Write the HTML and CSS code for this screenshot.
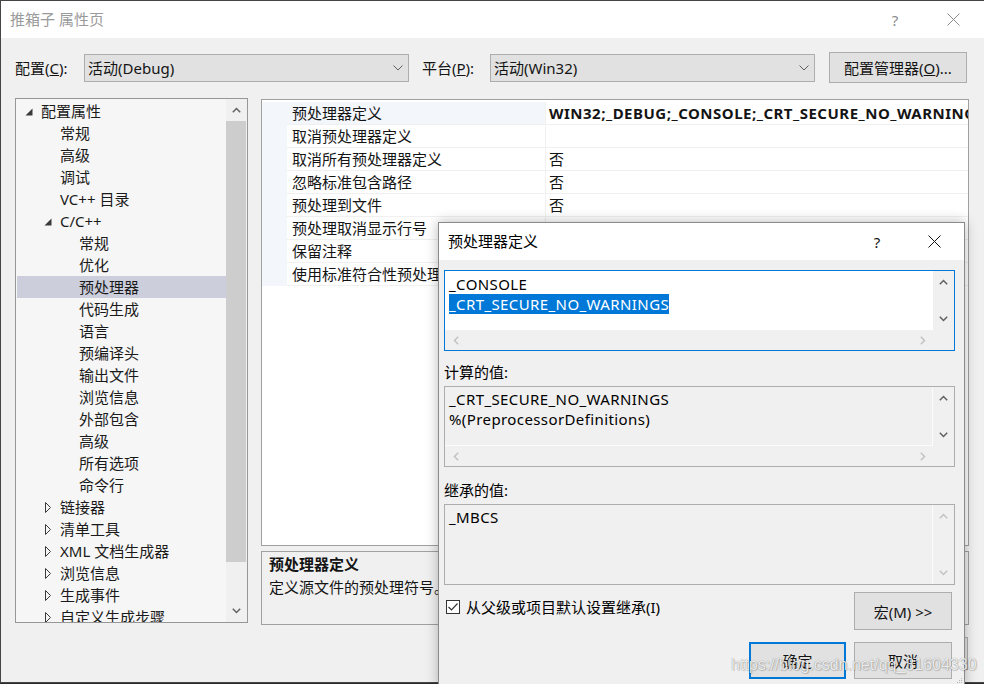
FILE: index.html
```html
<!DOCTYPE html>
<html lang="zh-CN">
<head>
<meta charset="utf-8">
<title>推箱子 属性页</title>
<link rel="stylesheet" href="styles.css">
</head>
<body>
<div class="window">
  <div class="titlebar">
    <span class="title">推箱子 属性页</span>
    <span class="cap-btn help">?</span>
    <span class="cap-btn close"><svg width="13" height="13" viewBox="0 0 13 13"><path d="M0.5 0.5 L12.5 12.5 M12.5 0.5 L0.5 12.5" stroke="currentColor" stroke-width="1" fill="none"/></svg></span>
  </div>
  <div class="client">
    <div class="config-row">
      <span class="cfg-label first">配置(<u>C</u>):</span>
      <div class="combo"><span class="combo-text">活动(Debug)</span><svg class="combo-arrow" width="10" height="6" viewBox="0 0 10 6"><path d="M0.5 0.5 L5 5 L9.5 0.5" stroke="#606060" stroke-width="1" fill="none"/></svg></div>
      <span class="cfg-label second">平台(<u>P</u>):</span>
      <div class="combo"><span class="combo-text">活动(Win32)</span><svg class="combo-arrow" width="10" height="6" viewBox="0 0 10 6"><path d="M0.5 0.5 L5 5 L9.5 0.5" stroke="#606060" stroke-width="1" fill="none"/></svg></div>
      <button class="btn cfg-mgr">配置管理器(<u>O</u>)...</button>
    </div>

    <div class="content">
      <div class="tree">
        <div class="tree-list">
          <div class="trow l0"><span class="tog"><svg width="8" height="8" viewBox="0 0 8 8"><polygon points="7.5,0.5 7.5,7.5 0.5,7.5" fill="#3a3a3a"/></svg></span>配置属性</div>
          <div class="trow l1"><span class="tog"></span>常规</div>
          <div class="trow l1"><span class="tog"></span>高级</div>
          <div class="trow l1"><span class="tog"></span>调试</div>
          <div class="trow l1"><span class="tog"></span>VC++ 目录</div>
          <div class="trow l1"><span class="tog"><svg width="8" height="8" viewBox="0 0 8 8"><polygon points="7.5,0.5 7.5,7.5 0.5,7.5" fill="#3a3a3a"/></svg></span>C/C++</div>
          <div class="trow l2"><span class="tog"></span>常规</div>
          <div class="trow l2"><span class="tog"></span>优化</div>
          <div class="trow l2 selected"><span class="tog"></span>预处理器</div>
          <div class="trow l2"><span class="tog"></span>代码生成</div>
          <div class="trow l2"><span class="tog"></span>语言</div>
          <div class="trow l2"><span class="tog"></span>预编译头</div>
          <div class="trow l2"><span class="tog"></span>输出文件</div>
          <div class="trow l2"><span class="tog"></span>浏览信息</div>
          <div class="trow l2"><span class="tog"></span>外部包含</div>
          <div class="trow l2"><span class="tog"></span>高级</div>
          <div class="trow l2"><span class="tog"></span>所有选项</div>
          <div class="trow l2"><span class="tog"></span>命令行</div>
          <div class="trow l1"><span class="tog"><svg width="8" height="11" viewBox="0 0 8 11"><polygon points="1.5,0.5 6.5,5.5 1.5,10.5" fill="none" stroke="#3a3a3a" stroke-width="1"/></svg></span>链接器</div>
          <div class="trow l1"><span class="tog"><svg width="8" height="11" viewBox="0 0 8 11"><polygon points="1.5,0.5 6.5,5.5 1.5,10.5" fill="none" stroke="#3a3a3a" stroke-width="1"/></svg></span>清单工具</div>
          <div class="trow l1"><span class="tog"><svg width="8" height="11" viewBox="0 0 8 11"><polygon points="1.5,0.5 6.5,5.5 1.5,10.5" fill="none" stroke="#3a3a3a" stroke-width="1"/></svg></span>XML 文档生成器</div>
          <div class="trow l1"><span class="tog"><svg width="8" height="11" viewBox="0 0 8 11"><polygon points="1.5,0.5 6.5,5.5 1.5,10.5" fill="none" stroke="#3a3a3a" stroke-width="1"/></svg></span>浏览信息</div>
          <div class="trow l1"><span class="tog"><svg width="8" height="11" viewBox="0 0 8 11"><polygon points="1.5,0.5 6.5,5.5 1.5,10.5" fill="none" stroke="#3a3a3a" stroke-width="1"/></svg></span>生成事件</div>
          <div class="trow l1"><span class="tog"><svg width="8" height="11" viewBox="0 0 8 11"><polygon points="1.5,0.5 6.5,5.5 1.5,10.5" fill="none" stroke="#3a3a3a" stroke-width="1"/></svg></span>自定义生成步骤</div>
        </div>
        <div class="tree-scroll">
          <div class="sarrow"><svg width="9" height="6" viewBox="0 0 9 6"><path d="M0.8 5.2 L4.5 1.5 L8.2 5.2" stroke="#606060" stroke-width="1.5" fill="none"/></svg></div>
          <div class="thumb"></div>
          <div class="track"></div>
          <div class="sarrow down"><svg width="9" height="6" viewBox="0 0 9 6"><path d="M0.8 0.8 L4.5 4.5 L8.2 0.8" stroke="#606060" stroke-width="1.5" fill="none"/></svg></div>
        </div>
      </div>

      <div class="right-col">
        <div class="grid">
          <div class="prow sel"><span class="gutter"></span><span class="pname">预处理器定义</span><span class="pval bold">WIN32;_DEBUG;_CONSOLE;_CRT_SECURE_NO_WARNINGS;%(PreprocessorDefinitions)</span></div>
          <div class="prow"><span class="gutter"></span><span class="pname">取消预处理器定义</span><span class="pval"></span></div>
          <div class="prow"><span class="gutter"></span><span class="pname">取消所有预处理器定义</span><span class="pval">否</span></div>
          <div class="prow"><span class="gutter"></span><span class="pname">忽略标准包含路径</span><span class="pval">否</span></div>
          <div class="prow"><span class="gutter"></span><span class="pname">预处理到文件</span><span class="pval">否</span></div>
          <div class="prow"><span class="gutter"></span><span class="pname">预处理取消显示行号</span><span class="pval">否</span></div>
          <div class="prow"><span class="gutter"></span><span class="pname">保留注释</span><span class="pval">否</span></div>
          <div class="prow"><span class="gutter"></span><span class="pname">使用标准符合性预处理器</span><span class="pval">否</span></div>
        </div>
        <div class="desc">
          <div class="desc-title">预处理器定义</div>
          <div class="desc-text">定义源文件的预处理符号。</div>
        </div>
      </div>
    </div>

    <div class="footer">
      <button class="btn fbtn">确定</button>
      <button class="btn fbtn">取消</button>
      <button class="btn fbtn">应用(<u>A</u>)</button>
    </div>
  </div>
</div>

<div class="dialog">
  <div class="dlg-title">
    <span class="dlg-caption">预处理器定义</span>
    <span class="cap-btn dhelp">?</span>
    <span class="cap-btn dclose"><svg width="13" height="13" viewBox="0 0 13 13"><path d="M0.5 0.5 L12.5 12.5 M12.5 0.5 L0.5 12.5" stroke="#111" stroke-width="1" fill="none"/></svg></span>
  </div>
  <div class="dlg-body">
    <div class="edit focused">
      <div class="edit-text">
        <div class="line">_CONSOLE</div>
        <div class="line"><span class="seltext">_CRT_SECURE_NO_WARNINGS</span></div>
      </div>
      <div class="vs">
        <div class="varrow"><svg width="9" height="6" viewBox="0 0 9 6"><path d="M0.8 5.2 L4.5 1.5 L8.2 5.2" stroke="#606060" stroke-width="1.5" fill="none"/></svg></div>
        <div class="varrow"><svg width="9" height="6" viewBox="0 0 9 6"><path d="M0.8 0.8 L4.5 4.5 L8.2 0.8" stroke="#606060" stroke-width="1.5" fill="none"/></svg></div>
      </div>
      <div class="hs">
        <div class="harrow"><svg width="6" height="9" viewBox="0 0 6 9"><path d="M5.2 0.8 L1.5 4.5 L5.2 8.2" stroke="#c2c2c2" stroke-width="1.5" fill="none"/></svg></div>
        <div class="harrow"><svg width="6" height="9" viewBox="0 0 6 9"><path d="M0.8 0.8 L4.5 4.5 L0.8 8.2" stroke="#c2c2c2" stroke-width="1.5" fill="none"/></svg></div>
      </div>
      <div class="corner"></div>
    </div>

    <div class="dlg-label">计算的值:</div>
    <div class="edit readonly">
      <div class="edit-text">
        <div class="line">_CRT_SECURE_NO_WARNINGS</div>
        <div class="line">%(PreprocessorDefinitions)</div>
      </div>
      <div class="vs">
        <div class="varrow"><svg width="9" height="6" viewBox="0 0 9 6"><path d="M0.8 5.2 L4.5 1.5 L8.2 5.2" stroke="#606060" stroke-width="1.5" fill="none"/></svg></div>
        <div class="varrow"><svg width="9" height="6" viewBox="0 0 9 6"><path d="M0.8 0.8 L4.5 4.5 L8.2 0.8" stroke="#606060" stroke-width="1.5" fill="none"/></svg></div>
      </div>
      <div class="hs">
        <div class="harrow"><svg width="6" height="9" viewBox="0 0 6 9"><path d="M5.2 0.8 L1.5 4.5 L5.2 8.2" stroke="#c2c2c2" stroke-width="1.5" fill="none"/></svg></div>
        <div class="harrow"><svg width="6" height="9" viewBox="0 0 6 9"><path d="M0.8 0.8 L4.5 4.5 L0.8 8.2" stroke="#c2c2c2" stroke-width="1.5" fill="none"/></svg></div>
      </div>
      <div class="corner"></div>
    </div>

    <div class="dlg-label">继承的值:</div>
    <div class="edit readonly nohs">
      <div class="edit-text">
        <div class="line">_MBCS</div>
      </div>
      <div class="vs">
        <div class="varrow"><svg width="9" height="6" viewBox="0 0 9 6"><path d="M0.8 5.2 L4.5 1.5 L8.2 5.2" stroke="#c2c2c2" stroke-width="1.5" fill="none"/></svg></div>
        <div class="varrow"><svg width="9" height="6" viewBox="0 0 9 6"><path d="M0.8 0.8 L4.5 4.5 L8.2 0.8" stroke="#c2c2c2" stroke-width="1.5" fill="none"/></svg></div>
      </div>
    </div>

    <div class="check-row">
      <label class="check"><span class="box"><svg width="12" height="12" viewBox="0 0 12 12"><path d="M1.5 6 L4.5 9 L10.5 2.5" stroke="#333" stroke-width="1.2" fill="none"/></svg></span>从父级或项目默认设置继承(I)</label>
      <button class="btn dbtn macro">宏(M) &gt;&gt;</button>
    </div>
    <div class="btn-row">
      <button class="btn dbtn default">确定</button>
      <button class="btn dbtn">取消</button>
    </div>
  </div>
  <svg class="grip" width="10" height="10" viewBox="0 0 10 10"><g fill="#b5b5b5"><rect x="8" y="2" width="1" height="1"/><rect x="6" y="4" width="1" height="1"/><rect x="8" y="4" width="1" height="1"/><rect x="4" y="6" width="1" height="1"/><rect x="6" y="6" width="1" height="1"/><rect x="8" y="6" width="1" height="1"/></g></svg>
</div>

<div class="watermark">https://blog.csdn.net/qq_31604330</div>
</body>
</html>
```

FILE: styles.css
```css
* { box-sizing: border-box; }

html, body {
  margin: 0;
  padding: 0;
}

body {
  position: relative;
  width: 984px;
  height: 684px;
  overflow: hidden;
  background: #2b2b2b;
  font-family: "Noto Sans", "Noto Sans CJK SC", sans-serif;
  font-size: 15px;
  color: #141414;
}

button {
  font-family: inherit;
  font-size: 15px;
  color: #141414;
  padding: 0;
}

/* ---------- main window ---------- */
.window {
  width: 984px;
  height: 683px;
  border: 1px solid #454545;
  border-right: none;
  background: #f0f0f0;
  display: flex;
  flex-direction: column;
  overflow: hidden;
}

.titlebar {
  flex: none;
  height: 37px;
  background: #fff;
  display: flex;
  align-items: center;
}

.title {
  flex: 1;
  padding-left: 9px;
  line-height: 37px;
  color: #9a9a9a;
}

.cap-btn {
  width: 46px;
  height: 37px;
  display: flex;
  align-items: center;
  justify-content: center;
  color: #8c8c8c;
  font-size: 15px;
}

.titlebar .close {
  margin-left: 12px;
  margin-right: 8px;
}

.client {
  flex: 1;
  padding: 14px 15px 0 14px;
  display: flex;
  flex-direction: column;
}

.config-row {
  display: flex;
  align-items: center;
  height: 31px;
}

.cfg-label {
  flex: none;
  line-height: 20px;
}
.cfg-label.first { width: 69px; }
.cfg-label.second { width: 81px; padding-left: 13px; }

.combo {
  flex: none;
  width: 325px;
  height: 28px;
  border: 1px solid #adadad;
  background: #e1e1e1;
  display: flex;
  align-items: center;
  padding: 0 5px 0 3px;
}
.combo-text { flex: 1; line-height: 20px; }
.combo-arrow { flex: none; }

.btn {
  border: 1px solid #adadad;
  background: #e1e1e1;
  display: flex;
  align-items: center;
  justify-content: center;
}

.cfg-mgr {
  flex: none;
  width: 138px;
  height: 31px;
  margin-left: 14px;
}

.content {
  flex: none;
  display: flex;
  gap: 13px;
  margin-top: 15px;
}

/* ---------- tree ---------- */
.tree {
  flex: none;
  width: 233px;
  height: 525px;
  border: 1px solid #979797;
  background: #f6f6f6;
  display: flex;
}

.tree-list {
  flex: 1;
  padding: 1px 0 0 1px;
  overflow: hidden;
}

.trow {
  height: 22px;
  line-height: 22px;
  display: flex;
  align-items: center;
  white-space: nowrap;
  color: #1a1a1a;
}
.trow.l0 { padding-left: 8px; }
.trow.l1 { padding-left: 27px; }
.trow.l2 { padding-left: 46px; }
.trow.selected { background: #cccedb; }

.tog {
  flex: none;
  width: 16px;
  height: 22px;
  display: flex;
  align-items: center;
  padding-top: 1px;
}

.tree-scroll {
  flex: none;
  width: 21px;
  background: #f0f0f0;
  display: flex;
  flex-direction: column;
}
.sarrow {
  flex: none;
  height: 22px;
  display: flex;
  align-items: center;
  justify-content: center;
}
.sarrow.down { height: 23px; }
.thumb {
  flex: none;
  height: 441px;
  margin: 0 1px 0 0;
  background: #cdcdcd;
}
.track { flex: 1; }

/* ---------- property grid ---------- */
.right-col {
  flex: none;
  width: 708px;
  display: flex;
  flex-direction: column;
  gap: 5px;
  margin-top: 1px;
}

.grid {
  height: 447px;
  border: 1px solid #a0a0a0;
  background: #fff;
  padding-top: 2px;
  overflow: hidden;
}

.prow {
  display: flex;
  height: 23px;
}
.gutter {
  flex: none;
  width: 25px;
  background: #f3f6fb;
}
.pname, .pval {
  height: 23px;
  line-height: 22px;
  border-bottom: 1px solid #f0f0f0;
  white-space: nowrap;
  overflow: hidden;
}
.pname {
  flex: none;
  width: 259px;
  padding-left: 5px;
  border-right: 1px solid #f0f0f0;
}
.prow.sel .pname { background: #f3f6fb; }
.pval {
  flex: 1;
  padding-left: 3px;
}
.pval.bold {
  font-weight: bold;
  font-size: 15px;
  letter-spacing: 0.5px;
}

.desc {
  height: 74px;
  border: 1px solid #a0a0a0;
  background: #f0f0f0;
  padding: 1px 7px 0 7px;
}
.desc-title {
  line-height: 23px;
  font-weight: bold;
}
.desc-text {
  line-height: 23px;
}

.footer {
  display: flex;
  justify-content: flex-end;
  gap: 8px;
  margin-top: 12px;
  padding-right: 1px;
}
.fbtn {
  width: 97px;
  height: 33px;
}

/* ---------- dialog ---------- */
.dialog {
  position: absolute;
  left: 438px;
  top: 222px;
  width: 527px;
  height: 466px;
  border: 1px solid #8a8a8a;
  background: #f0f0f0;
  box-shadow: 0 0 12px rgba(0, 0, 0, 0.28);
  display: flex;
  flex-direction: column;
}

.dlg-title {
  flex: none;
  height: 37px;
  background: #fff;
  display: flex;
  align-items: center;
}
.dlg-caption {
  flex: 1;
  padding-left: 9px;
  line-height: 37px;
  color: #000;
}
.dlg-title .cap-btn { color: #111; }
.dlg-title .dclose {
  margin-left: 11px;
  margin-right: 7px;
}

.dlg-body {
  flex: 1;
  padding: 10px 9px 0 5px;
  display: flex;
  flex-direction: column;
}

.edit {
  flex: none;
  height: 81px;
  border: 1px solid #adadad;
  display: grid;
  grid-template-columns: 1fr 21px;
  grid-template-rows: 1fr 20px;
  background: #f0f0f0;
}
.edit.focused { border-color: #0078d7; }
.edit.nohs { grid-template-rows: 1fr; }

.edit-text {
  padding: 2px 0 0 4px;
  overflow: hidden;
  white-space: nowrap;
}
.edit.focused .edit-text { background: #fff; padding-top: 3px; }
.edit.readonly .edit-text {
  border-right: 1px solid #fbfbfb;
  border-bottom: 1px solid #fbfbfb;
}
.edit.readonly.nohs .edit-text { border-bottom: none; }

.line {
  height: 20px;
  line-height: 20px;
  color: #000;
  letter-spacing: 0.4px;
}
.seltext {
  display: inline-block;
  height: 20px;
  background: #0078d7;
  color: #fff;
}

.vs {
  display: flex;
  flex-direction: column;
  justify-content: space-between;
}
.varrow {
  height: 22px;
  display: flex;
  align-items: center;
  justify-content: center;
}
.hs {
  display: flex;
  justify-content: space-between;
}
.harrow {
  width: 21px;
  display: flex;
  align-items: center;
  justify-content: center;
}

.dlg-label {
  flex: none;
  line-height: 21px;
  margin-top: 11px;
  margin-bottom: 3px;
  color: #000;
}
.edit.readonly + .dlg-label { margin-top: 13px; }

.check-row {
  flex: none;
  display: flex;
  align-items: flex-start;
  margin-top: 7px;
}
.check {
  display: flex;
  align-items: center;
  margin-top: 5px;
  margin-left: 2px;
  line-height: 20px;
  color: #000;
}
.box {
  width: 14px;
  height: 14px;
  border: 1px solid #333;
  background: #fff;
  margin-right: 6px;
  display: flex;
  align-items: center;
  justify-content: center;
}

.dbtn {
  width: 98px;
  height: 37px;
}
.macro {
  margin-left: auto;
  margin-right: 3px;
  height: 38px;
}

.btn-row {
  flex: none;
  display: flex;
  justify-content: flex-end;
  gap: 8px;
  margin-top: 12px;
  padding-right: 3px;
}
.default {
  width: 97px;
  border: 2px solid #0078d7;
}

.grip {
  position: absolute;
  right: 1px;
  bottom: 1px;
}

/* ---------- watermark overlay ---------- */
.watermark {
  position: absolute;
  left: 731px;
  top: 655px;
  font-family: "Liberation Sans", sans-serif;
  font-size: 16px;
  line-height: 20px;
  color: rgba(255, 255, 255, 0.85);
  text-shadow: 0 0 1px rgba(0, 0, 0, 0.45), 1px 1px 1px rgba(0, 0, 0, 0.15);
  pointer-events: none;
}
```
